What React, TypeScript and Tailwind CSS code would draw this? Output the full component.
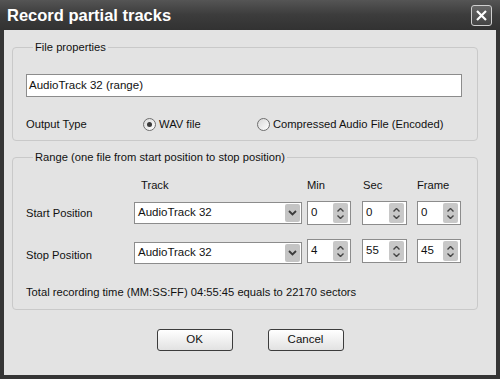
import React from "react";

const font = { fontFamily: '"Liberation Sans", Arial, sans-serif' };

function Radio({ checked }: { checked?: boolean }) {
  return (
    <span className="inline-flex h-[13px] w-[13px] items-center justify-center rounded-full border border-[#6e6e6e] bg-gradient-to-br from-[#d8d8d8] to-white">
      {checked && <span className="h-[5px] w-[5px] rounded-full bg-[#3a3a3a]" />}
    </span>
  );
}

function Combo() {
  return (
    <div className="flex h-[22px] w-[168px] items-center border border-[#8c8c8c] bg-white">
      <span className="flex-1 pl-[3px] text-[11.5px] text-[#111]">AudioTrack 32</span>
      <span className="mr-[1px] flex h-[18px] w-[15px] items-center justify-center rounded-[2px] bg-[#c4c4c4]">
        <svg width="9" height="6" viewBox="0 0 9 6">
          <path d="M1 1 L4.5 4.5 L8 1" fill="none" stroke="#3a3a3a" strokeWidth="1.8" />
        </svg>
      </span>
    </div>
  );
}

function Spin({ value, w }: { value: string; w: string }) {
  return (
    <div className={`flex h-[24px] ${w} items-center border border-[#8c8c8c] bg-white`}>
      <span className="flex-1 pl-[3px] text-[11.5px] text-[#111]">{value}</span>
      <span className="mr-[2px] flex h-[20px] w-[15px] flex-col items-center justify-center gap-[3px] rounded-[2px] bg-[#c8c8c8]">
        <svg width="7" height="4" viewBox="0 0 7 4">
          <path d="M0.5 3.5 L3.5 0.5 L6.5 3.5" fill="none" stroke="#444" strokeWidth="1.4" />
        </svg>
        <svg width="7" height="4" viewBox="0 0 7 4">
          <path d="M0.5 0.5 L3.5 3.5 L6.5 0.5" fill="none" stroke="#444" strokeWidth="1.4" />
        </svg>
      </span>
    </div>
  );
}

export default function App() {
  return (
    <div className="flex h-[379px] w-[500px] flex-col bg-[#353535]" style={font}>
      <div className="flex h-[30px] items-center bg-gradient-to-b from-[#555] via-[#3c3c3c] to-[#323232] pl-[7px] pr-[7px]">
        <span className="flex-1 text-[16.5px] font-bold text-white">Record partial tracks</span>
        <span className="mr-[1px] flex h-[21px] w-[21px] items-center justify-center rounded-[3px] border border-[#cfcfcf] bg-gradient-to-b from-[#666] to-[#444]">
          <svg width="13" height="13" viewBox="0 0 13 13">
            <path d="M2 2 L11 11 M11 2 L2 11" stroke="white" strokeWidth="2.2" />
          </svg>
        </span>
      </div>
      <div className="mx-[4px] mb-[4px] flex flex-1 flex-col bg-[#e3e3e3] pl-[8px] pr-[18px] text-[11.2px] text-[#111]">
        <fieldset className="mt-[10px] rounded-[4px] border border-[#c9c9c9] pb-[6px] pl-[13px]">
          <legend className="ml-[7px] px-[2px] leading-[14px]">File properties</legend>
          <div className="mt-[20px] flex h-[23px] w-[436px] items-center border border-[#8c8c8c] bg-white pl-[2px] text-[11.5px]">
            AudioTrack 32 (range)
          </div>
          <div className="mt-[17px] flex h-[20px] items-center">
            <span className="w-[117px]">Output Type</span>
            <Radio checked />
            <span className="ml-[3px] w-[98px]">WAV file</span>
            <Radio />
            <span className="ml-[3px]">Compressed Audio File (Encoded)</span>
          </div>
        </fieldset>
        <fieldset className="mt-[9px] rounded-[4px] border border-[#c9c9c9] pb-[10px] pl-[13px]">
          <legend className="ml-[7px] px-[2px] leading-[14px]">
            Range (one file from start position to stop position)
          </legend>
          <div className="mt-[14px] flex h-[14px] items-center leading-[14px]">
            <span className="w-[115px]" />
            <span className="w-[166px]">Track</span>
            <span className="w-[56px]">Min</span>
            <span className="w-[54px]">Sec</span>
            <span>Frame</span>
          </div>
          <div className="mt-[9px] flex h-[24px] items-center">
            <span className="w-[108px]">Start Position</span>
            <Combo />
            <div className="ml-[5px]"><Spin value="0" w="w-[44px]" /></div>
            <div className="ml-[11px]"><Spin value="0" w="w-[45px]" /></div>
            <div className="ml-[10px]"><Spin value="0" w="w-[44px]" /></div>
          </div>
          <div className="mt-[14px] flex h-[26px] items-start">
            <span className="mt-[8px] w-[108px]">Stop Position</span>
            <div className="mt-[3px]"><Combo /></div>
            <div className="ml-[5px]"><Spin value="4" w="w-[44px]" /></div>
            <div className="ml-[11px]"><Spin value="55" w="w-[45px]" /></div>
            <div className="ml-[10px]"><Spin value="45" w="w-[44px]" /></div>
          </div>
          <div className="mt-[20px] leading-[14px]">
            Total recording time (MM:SS:FF) 04:55:45 equals to 22170 sectors
          </div>
        </fieldset>
        <div className="mt-[19px] flex justify-center gap-[35px] pl-[10px]">
          <button className="h-[22px] w-[76px] rounded-[3px] border border-[#3c3c3c] bg-gradient-to-b from-white to-[#e2e2e2] text-[11.5px] text-[#111]">
            OK
          </button>
          <button className="h-[22px] w-[76px] rounded-[3px] border border-[#3c3c3c] bg-gradient-to-b from-white to-[#e2e2e2] text-[11.5px] text-[#111]">
            Cancel
          </button>
        </div>
      </div>
    </div>
  );
}
